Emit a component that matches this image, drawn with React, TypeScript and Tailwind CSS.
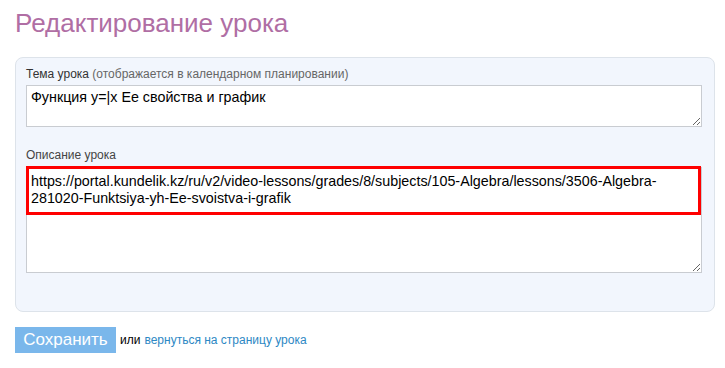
export default function App() {
  return (
    <main className="min-h-screen bg-white font-['Liberation_Sans',Arial,sans-serif] text-[#222]">
      <div className="px-[15px] pt-[7px]">
        <h1 className="text-[26px] leading-[32px] text-[#b06ea4]">Редактирование урока</h1>

        <section className="mt-[18px] w-[700px] rounded-[8px] border border-[#dde3ea] bg-[#f2f6fd] px-[10px] pb-[38px] pt-[8px]">
          <label className="block text-[12px] leading-[16px] text-[#333]">
            Тема урока <span className="text-[#666]">(отображается в календарном планировании)</span>
          </label>
          <textarea
            defaultValue="Функция y=|x Ее свойства и график"
            className="mt-[3px] block h-[42px] w-[676px] resize-y border border-[#c9ccd1] bg-white px-[4px] py-[3px] text-[14.3px] leading-[17px] text-black outline-none"
          />

          <label className="mt-[20px] block text-[12px] leading-[16px] text-[#444]">Описание урока</label>
          <div className="relative mt-[4px]">
            <textarea
              defaultValue="https://portal.kundelik.kz/ru/v2/video-lessons/grades/8/subjects/105-Algebra/lessons/3506-Algebra-281020-Funktsiya-yh-Ee-svoistva-i-grafik"
              className="block h-[106px] w-[676px] resize-y border border-[#c9ccd1] bg-white px-[4px] py-[5px] text-[14.3px] leading-[17px] text-black outline-none"
            />
            <div className="pointer-events-none absolute left-0 top-[-1px] h-[49px] w-[675px] border-[3px] border-[#ff0000]" />
          </div>
        </section>

        <div className="mt-[15px] flex items-center">
          <button className="h-[26px] w-[101px] bg-[#7ab7eb] text-[17px] leading-[26px] text-white">Сохранить</button>
          <span className="ml-[4px] text-[12px] text-black">или</span>
          <a href="#" className="ml-[4px] text-[12px] text-[#2d88c4]">
            вернуться на страницу урока
          </a>
        </div>
      </div>
    </main>
  );
}
